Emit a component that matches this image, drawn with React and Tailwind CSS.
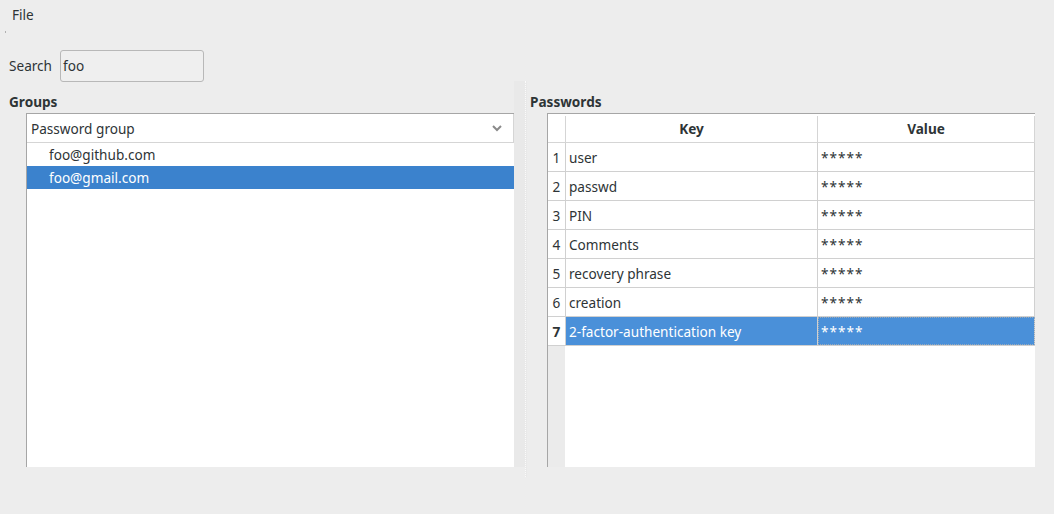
import React from "react";

const rows = [
  "user",
  "passwd",
  "PIN",
  "Comments",
  "recovery phrase",
  "creation",
  "2-factor-authentication key",
];

export default function App() {
  return (
    <div className="w-[1054px] h-[514px] bg-[#ededed] text-[#2e3436] text-[13.6px] overflow-hidden flex flex-col" style={{ fontFamily: '"Noto Sans", "Open Sans", sans-serif' }}>
      <div className="h-[28px] flex items-center pl-[12px] pt-[2px]">File</div>
      <div className="h-[21px]">
        <div className="ml-[5px] mt-[3px] w-[1px] h-[2px] bg-[#b0b0b0]" />
      </div>
      <div className="h-[32px] flex items-center pl-[9px] pt-[2px]">
        <span className="w-[51px]">Search</span>
        <div className="w-[144px] h-[32px] rounded-[3px] border border-[#b8b8b8] bg-[#efefef] flex items-center pl-[2px]">foo</div>
      </div>
      <div className="flex h-[396px]">
        {/* Left panel */}
        <div className="w-[514px] flex flex-col">
          <div className="h-[32px] flex items-center pl-[9px] pt-[10px] font-bold">Groups</div>
          <div className="ml-[26px] h-[354px] bg-white border-l border-t border-[#a6a6a6] flex flex-col">
            <div className="h-[29px] border-b border-r border-[#d5d5d5] flex items-center justify-between pl-[4px] pr-[11px] pt-[2px]">
              <span>Password group</span>
              <svg width="10" height="7" viewBox="0 0 10 7" className="-mt-[2px]">
                <path d="M1 1 L5 5 L9 1" fill="none" stroke="#8a8a8a" strokeWidth="2" />
              </svg>
            </div>
            <div className="h-[23px] flex items-center pl-[22px] pt-[2px]">foo@github.com</div>
            <div className="h-[23px] flex items-center pl-[22px] pt-[2px] bg-[#3b82cd] text-white">foo@gmail.com</div>
          </div>
        </div>
        {/* Splitter */}
        <div className="w-[13px] flex">
          <div className="w-[11px] h-[386px] bg-[#e9e9e9]" />
          <div className="w-[2px] h-[396px] border-l border-dotted border-[#fbfbfb] bg-[#e9e9e9]" />
        </div>
        {/* Right panel */}
        <div className="flex-1 flex flex-col">
          <div className="h-[32px] flex items-center pl-[3px] pt-[10px] font-bold">Passwords</div>
          <div className="ml-[20px] w-[488px] h-[354px] bg-white border-l border-t border-[#a6a6a6] flex flex-col">
            <div className="h-[29px] flex border-b border-[#d5d5d5] font-bold pt-[2px]">
              <div className="w-[18px] border-r border-[#d5d5d5]" />
              <div className="w-[252px] border-r border-[#d5d5d5] flex items-center justify-center">Key</div>
              <div className="flex-1 border-r border-[#d5d5d5] flex items-center justify-center">Value</div>
            </div>
            {rows.map((r, i) => {
              const sel = i === rows.length - 1;
              return (
                <div key={r} className="h-[29px] flex border-b border-[#d0d0d0]">
                  <div className={`w-[18px] border-r border-[#d0d0d0] flex items-center justify-center pt-[2px] ${sel ? "font-bold" : ""}`}>{i + 1}</div>
                  <div className={`w-[252px] border-r border-[#d0d0d0] flex items-center pl-[3px] pt-[2px] ${sel ? "bg-[#4a90d9] text-white" : ""}`}>{r}</div>
                  <div className={`flex-1 border-r border-[#d0d0d0] flex items-center pl-[3px] pt-[2px] tracking-[1px] ${sel ? "bg-[#4a90d9] text-white outline outline-1 outline-dotted outline-[#9ab] -outline-offset-1" : ""}`}>*****</div>
                </div>
              );
            })}
            <div className="flex-1 flex">
              <div className="w-[17px] bg-[#ebebeb]" />
            </div>
          </div>
        </div>
      </div>
    </div>
  );
}
